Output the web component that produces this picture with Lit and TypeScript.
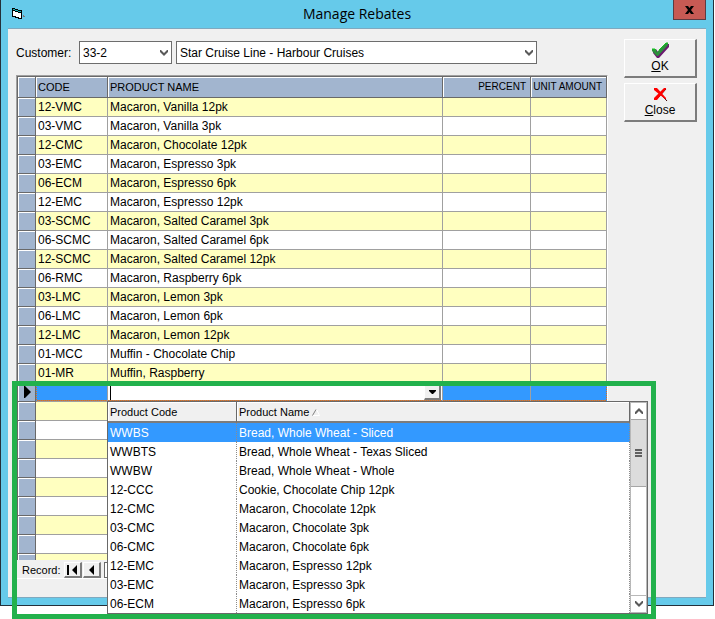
import { LitElement, html, css } from "lit";
import { customElement, state } from "lit/decorators.js";
import { classMap } from "lit/directives/class-map.js";

interface Product {
  code: string;
  name: string;
}

const REBATES: Product[] = [
  { code: "12-VMC", name: "Macaron, Vanilla 12pk" },
  { code: "03-VMC", name: "Macaron, Vanilla 3pk" },
  { code: "12-CMC", name: "Macaron, Chocolate 12pk" },
  { code: "03-EMC", name: "Macaron, Espresso 3pk" },
  { code: "06-ECM", name: "Macaron, Espresso 6pk" },
  { code: "12-EMC", name: "Macaron, Espresso 12pk" },
  { code: "03-SCMC", name: "Macaron, Salted Caramel 3pk" },
  { code: "06-SCMC", name: "Macaron, Salted Caramel 6pk" },
  { code: "12-SCMC", name: "Macaron, Salted Caramel 12pk" },
  { code: "06-RMC", name: "Macaron, Raspberry 6pk" },
  { code: "03-LMC", name: "Macaron, Lemon 3pk" },
  { code: "06-LMC", name: "Macaron, Lemon 6pk" },
  { code: "12-LMC", name: "Macaron, Lemon 12pk" },
  { code: "01-MCC", name: "Muffin - Chocolate Chip" },
  { code: "01-MR", name: "Muffin, Raspberry" },
];

const CHOICES: Product[] = [
  { code: "WWBS", name: "Bread, Whole Wheat - Sliced" },
  { code: "WWBTS", name: "Bread, Whole Wheat - Texas Sliced" },
  { code: "WWBW", name: "Bread, Whole Wheat - Whole" },
  { code: "12-CCC", name: "Cookie, Chocolate Chip 12pk" },
  { code: "12-CMC", name: "Macaron, Chocolate 12pk" },
  { code: "03-CMC", name: "Macaron, Chocolate 3pk" },
  { code: "06-CMC", name: "Macaron, Chocolate 6pk" },
  { code: "12-EMC", name: "Macaron, Espresso 12pk" },
  { code: "03-EMC", name: "Macaron, Espresso 3pk" },
  { code: "06-ECM", name: "Macaron, Espresso 6pk" },
];

const BLANK_ROWS = 12;

const chevron = html`<svg class="chevron" width="8" height="6" viewBox="0 0 8 6" aria-hidden="true">
  <path d="M0 0h1l3 3 3-3h1v2L4 6 0 2z" fill="#5a5a5a" />
</svg>`;

@customElement("app-root")
export class AppRoot extends LitElement {
  @state() private picked = 0;

  static styles = css`
    :host {
      display: block;
      box-sizing: border-box;
      height: 100vh;
      min-height: 619px;
      padding: 0 1px 13px 0;
      background: #fff;
      color: #000;
      font: 12px/16px "Liberation Sans", Arial, sans-serif;
    }
    * {
      box-sizing: border-box;
    }
    button,
    input,
    select {
      margin: 0;
      padding: 0;
      border: 0;
      border-radius: 0;
      color: inherit;
      font: inherit;
      outline: 0;
    }
    .window {
      display: flex;
      flex-direction: column;
      height: 100%;
      padding: 0 7px 7px;
      background: #66caea;
      border: 1px solid #24303a;
      border-top: 0;
    }
    .titlebar {
      display: grid;
      grid-template-columns: 33px 1fr 33px;
      flex: 0 0 28px;
    }
    .app-icon {
      margin: 8px 0 0 4px;
    }
    .title {
      margin: 0;
      text-align: center;
      font: 14px/28px "Open Sans", "Noto Sans", sans-serif;
    }
    .close {
      display: grid;
      place-items: center;
      height: 20px;
      background: #c75a54;
      border: 1px solid #5d3b42;
      border-top: 0;
    }
    .client {
      display: flex;
      flex: 1;
      gap: 16px;
      min-height: 0;
      padding: 10px 9px 18px 8px;
      background: #f0f0f0;
      border-top: 1px solid #7fa9bf;
      border-bottom: 1px solid #7fa9bf;
    }
    .left {
      display: flex;
      flex: 1;
      flex-direction: column;
      gap: 11px;
      min-width: 0;
    }
    .filter {
      display: flex;
      align-items: center;
      gap: 4px;
      padding-top: 2px;
    }
    .filter-label {
      flex: 0 0 59px;
    }
    .drop {
      display: grid;
      align-items: center;
      flex: 0 0 93px;
    }
    .drop.wide {
      flex: 0 1 361px;
    }
    .drop > * {
      grid-area: 1 / 1;
    }
    .drop select {
      width: 100%;
      height: 23px;
      padding: 0 20px 0 3px;
      appearance: none;
      background: #fff;
      border: 1px solid #6d6d6d;
    }
    .drop .chevron {
      justify-self: end;
      margin-right: 4px;
      pointer-events: none;
    }
    .actions {
      display: flex;
      flex: 0 0 73px;
      flex-direction: column;
      gap: 5px;
    }
    .action {
      display: flex;
      flex-direction: column;
      align-items: center;
      height: 39px;
      padding-top: 2px;
    }
    .raised {
      background: #f0f0f0;
      border: 1px solid #fff;
      border-right: 2px solid #7c7c7c;
      border-bottom: 2px solid #7c7c7c;
    }
    .grid-area {
      position: relative;
      display: flex;
      flex: 1;
      min-height: 0;
    }
    .grid {
      display: flex;
      flex: 1;
      flex-direction: column;
      min-width: 0;
      border: 1px solid #a0a0a0;
      border-right-color: #fff;
      border-bottom-color: #fff;
    }
    .rows {
      flex: 1;
      min-height: 0;
      overflow: hidden;
      border: 1px solid #696969;
      border-right: 0;
      border-bottom: 0;
    }
    table {
      width: 100%;
      border-spacing: 0;
      table-layout: fixed;
    }
    th,
    td {
      height: 19px;
      padding: 0 2px;
      overflow: hidden;
      border: 0 solid #a0a0a0;
      border-width: 0 1px 1px 0;
      line-height: 18px;
      text-align: left;
      white-space: nowrap;
    }
    th {
      height: 21px;
      background: #a2b5cf;
      border-color: #696969;
      box-shadow: inset 1px 1px #fff;
      font-weight: normal;
      font-size: 11px;
    }
    th.num {
      padding-right: 4px;
      text-align: right;
      font-size: 10px;
    }
    td.mark {
      background: #a2b5cf;
      border-color: #696969;
      box-shadow: inset 1px 1px #fff;
    }
    td.mark svg {
      display: block;
      margin: 0 0 0 4px;
    }
    tbody tr {
      background: #fff;
    }
    tbody tr:nth-child(odd) {
      background: #ffffc0;
    }
    .c-mark {
      width: 18px;
    }
    .c-code {
      width: 72px;
    }
    .c-percent {
      width: 88px;
    }
    .c-amount {
      width: 76px;
    }
    /* The focused row is underlined with alternating orange dots. */
    tr.active td:not(.mark) {
      padding: 0;
      background: repeating-linear-gradient(90deg, #e0701a 0 1px, #a08070 1px 2px) 0 100% / 100% 1px no-repeat
        #3399ff;
    }
    tr.active td.code {
      border-left: 1px dotted #e0701a;
    }
    tr.active td.amount {
      border-right: 1px dotted #e0701a;
    }
    .combo {
      display: flex;
      align-items: flex-end;
      height: 17px;
      margin-bottom: 1px;
      padding-left: 2px;
      background: #fff;
    }
    .caret {
      flex: 0 0 1px;
      height: 14px;
      background: #000;
    }
    .combo input {
      flex: 1;
      min-width: 0;
      height: 17px;
      background: #fff;
    }
    .combo button {
      display: grid;
      place-items: center;
      width: 17px;
      height: 17px;
      margin-right: 1px;
      padding-top: 2px;
    }
    .navigator {
      display: flex;
      flex: 0 0 18px;
      align-items: flex-end;
      gap: 1px;
      padding-left: 5px;
    }
    .navigator .caption {
      flex: 0 0 41px;
      font-size: 11px;
    }
    .navigator button {
      display: grid;
      place-items: center;
      width: 18px;
      height: 16px;
    }
    .navigator input {
      width: 64px;
      height: 16px;
      margin-left: 2px;
      background: #fff;
      border: 1px solid #696969;
    }
    .popup {
      position: absolute;
      top: 326px;
      left: 91px;
      display: flex;
      width: 541px;
      height: 213px;
      background: #fff;
      border: 1px solid #696969;
    }
    .popup table {
      flex: 1;
    }
    .popup th {
      background: #f0f0f0;
      border-bottom: 2px solid #7c7c7c;
    }
    .popup tbody tr {
      background: #fff;
      cursor: default;
    }
    .popup td {
      padding-top: 1px;
      border-right: 1px dotted #8c8c8c;
      border-bottom: 0;
    }
    .popup tbody tr.picked {
      background: #3399ff;
      color: #fff;
    }
    .c-pcode {
      width: 129px;
    }
    .scrollbar {
      display: flex;
      flex: 0 0 17px;
      flex-direction: column;
      border: 1px solid #b8b8b8;
    }
    .scrollbar button {
      display: grid;
      place-items: center;
      flex: 0 0 16px;
      background: #fff;
    }
    .thumb {
      display: grid;
      place-items: center;
      height: 68px;
      background: #dcdcdc;
      border: 1px solid #a6a6a6;
      border-width: 1px 0;
    }
    .track {
      flex: 1;
      border-bottom: 1px solid #b8b8b8;
    }
    .callout {
      position: absolute;
      top: 306px;
      left: -4px;
      width: 644px;
      height: 238px;
      border: 5px solid #22b14c;
      pointer-events: none;
    }
  `;

  private activeRow() {
    return html`<tr class="active">
      <td class="mark">
        <svg width="7" height="12" viewBox="0 0 7 12" aria-hidden="true"><path d="M0 0h1l6 6-6 6H0z" /></svg>
      </td>
      <td class="code"></td>
      <td>
        <div class="combo">
          <span class="caret"></span>
          <input aria-label="Product name" />
          <button class="raised" aria-label="Show products">
            <svg width="7" height="4" viewBox="0 0 7 4" aria-hidden="true"><path d="M0 0h7v1L4 4H3L0 1z" /></svg>
          </button>
        </div>
      </td>
      <td></td>
      <td class="amount"></td>
    </tr>`;
  }

  private popup() {
    return html`<div class="popup">
      <table aria-label="Products">
        <colgroup>
          <col class="c-pcode" />
          <col />
        </colgroup>
        <thead>
          <tr>
            <th>Product Code</th>
            <th>
              Product Name
              <svg width="8" height="7" viewBox="0 0 8 7" aria-hidden="true">
                <path d="M4.500 .5 7.500 6.500H1" fill="none" stroke="#fff" />
                <path d="M.5 6.500 4 .5" fill="none" stroke="#808080" />
              </svg>
            </th>
          </tr>
        </thead>
        <tbody>
          ${CHOICES.map(
            (p, i) => html`<tr class=${classMap({ picked: i === this.picked })} @click=${() => (this.picked = i)}>
              <td>${p.code}</td>
              <td>${p.name}</td>
            </tr>`
          )}
        </tbody>
      </table>
      <div class="scrollbar">
        <button aria-label="Scroll up">
          <svg width="8" height="6" viewBox="0 0 8 6" aria-hidden="true">
            <path d="M0 6h1l3-3 3 3h1V4L4 0 0 4z" fill="#5a5a5a" />
          </svg>
        </button>
        <div class="thumb">
          <svg width="7" height="8" viewBox="0 0 7 8" aria-hidden="true">
            <path d="M0 0h7v2H0zM0 3h7v2H0zM0 6h7v2H0z" fill="#606060" />
          </svg>
        </div>
        <div class="track"></div>
        <button aria-label="Scroll down">${chevron}</button>
      </div>
    </div>`;
  }

  render() {
    return html`
      <div class="window">
        <header class="titlebar">
          <svg class="app-icon" width="14" height="12" viewBox="0 0 14 12" aria-hidden="true">
            <path d="M11 7h1v1h1v1h-2z" fill="#7a7a7a" />
            <path d="M0 0h3v1h3v1h4v9H6v-1H3V9H0z" fill="#000" />
            <path d="M1 3h2v1h3v1h3v5H7V9H4V8H1z" fill="#fff" />
            <path d="M1 1h2v1h3v1h3v1H6V3H3V2H1z" fill="#17b3b3" />
          </svg>
          <h1 class="title">Manage Rebates</h1>
          <button class="close" aria-label="Close window">
            <svg width="9" height="8" viewBox="0 0 9 8" aria-hidden="true">
              <path d="M0 0h3l1.500 2L6 0h3L6 4l3 4H6L4.500 6 3 8H0l3-4z" />
            </svg>
          </button>
        </header>
        <main class="client">
          <div class="left">
            <div class="filter">
              <label class="filter-label" for="code">Customer:</label>
              <div class="drop">
                <select id="code">
                  <option>33-2</option>
                </select>
                ${chevron}
              </div>
              <div class="drop wide">
                <select aria-label="Customer name">
                  <option>Star Cruise Line - Harbour Cruises</option>
                </select>
                ${chevron}
              </div>
            </div>
            <div class="grid-area">
              <div class="grid">
                <div class="rows">
                  <table aria-label="Rebates">
                    <colgroup>
                      <col class="c-mark" />
                      <col class="c-code" />
                      <col />
                      <col class="c-percent" />
                      <col class="c-amount" />
                    </colgroup>
                    <thead>
                      <tr>
                        <th></th>
                        <th>CODE</th>
                        <th>PRODUCT NAME</th>
                        <th class="num">PERCENT</th>
                        <th class="num">UNIT AMOUNT</th>
                      </tr>
                    </thead>
                    <tbody>
                      ${REBATES.map(
                        (p) => html`<tr>
                          <td class="mark"></td>
                          <td>${p.code}</td>
                          <td>${p.name}</td>
                          <td></td>
                          <td></td>
                        </tr>`
                      )}
                      ${this.activeRow()}
                      ${Array.from(
                        { length: BLANK_ROWS },
                        () => html`<tr>
                          <td class="mark"></td>
                          <td></td>
                          <td></td>
                          <td></td>
                          <td></td>
                        </tr>`
                      )}
                    </tbody>
                  </table>
                </div>
                <div class="navigator">
                  <label class="caption" for="record">Record:</label>
                  <button class="raised" aria-label="First record">
                    <svg width="11" height="10" viewBox="0 0 11 10" aria-hidden="true">
                      <path d="M0 0h2v10H0zM10 0v10L5 5z" />
                    </svg>
                  </button>
                  <button class="raised" aria-label="Previous record">
                    <svg width="5" height="10" viewBox="0 0 5 10" aria-hidden="true"><path d="M5 0v10L0 5z" /></svg>
                  </button>
                  <input id="record" />
                </div>
              </div>
              ${this.popup()}
              <div class="callout"></div>
            </div>
          </div>
          <div class="actions">
            <button class="action raised">
              <svg width="17" height="16" viewBox="0 0 17 16" aria-hidden="true">
                <path d="M1 8 4 7l2 3 8-8h3v3L7 16H5L1 11z" fill="#6b1a70" />
                <path d="M0 7h3l2 3 9-9h2v2L6 14H5L0 9z" fill="#2c8f3c" />
                <path d="M0 7h3l1 2M7 8l7-7h2" fill="none" stroke="#0ecb1a" />
              </svg>
              <span><u>O</u>K</span>
            </button>
            <button class="action raised">
              <svg width="15" height="16" viewBox="0 0 15 16" aria-hidden="true">
                <path d="M3 3 14 15M13 3 3 14" fill="none" stroke="#400" />
                <path d="M1 2h3l9 10v1h-1L1 4z" fill="#f00" />
                <path d="M11 2h2v1L4 14H1v-2z" fill="#f00" />
              </svg>
              <span><u>C</u>lose</span>
            </button>
          </div>
        </main>
      </div>
    `;
  }
}
